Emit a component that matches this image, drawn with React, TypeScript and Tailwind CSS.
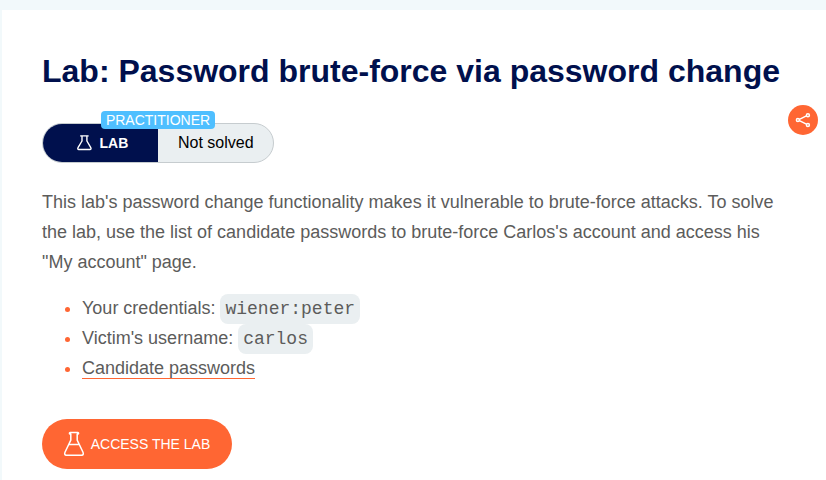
import type { ReactNode } from "react";

function Code({ children }: { children: ReactNode }) {
  return (
    <code className="rounded-lg bg-[#eaeff1] p-[5px] font-['Liberation_Mono',monospace] text-[18px]">
      {children}
    </code>
  );
}

function Bullet({ children }: { children: ReactNode }) {
  return (
    <li className="flex h-[30px] items-start">
      <span className="mt-[14px] mr-[12px] ml-[23px] size-[5px] shrink-0 rounded-full bg-[#ff6633]" />
      <span className="whitespace-pre">{children}</span>
    </li>
  );
}

function SmallFlask() {
  return (
    <svg className="h-[16px] w-[16px]" viewBox="0 0 16 16" fill="none" stroke="#fff" strokeWidth="1.4" strokeLinejoin="round" strokeLinecap="round">
      <path d="M4.7 .9h7.4M6 1v5L2 12.7q-.8 1.6 .9 1.8h11q1.7-.2 .9-1.8L10.9 6V1" />
    </svg>
  );
}

function LargeFlask() {
  return (
    <svg className="h-[26px] w-[22px]" viewBox="0 0 22 26" fill="none" stroke="#fff" strokeWidth="1.5" strokeLinejoin="round">
      <path d="M7.1 1.5h7.8q.7 0 .7.8t-.7.8h-.7v6l5.8 12.2q1 2.6-1.3 2.9H3.3q-2.3-.3-1.3-2.9L7.8 9.1v-6h-.7q-.7 0-.7-.8t.7-.8zM5.2 13.6h11.6" />
    </svg>
  );
}

export default function App() {
  return (
    <div className="h-[480px] w-full overflow-hidden bg-[#f2f9fb] pt-[10px] pl-[2px] font-['Liberation_Sans',Arial,sans-serif] text-[#5c5c5b]">
      <main className="relative h-full bg-white pt-[41px] pl-[40px]">
        <h1 className="text-[32px] leading-[40px] font-bold whitespace-nowrap text-[#00104d]">
          Lab: Password brute-force via password change
        </h1>

        <div className="relative mt-[32px] flex h-[40px] w-[232px]">
          <div className="flex w-full overflow-hidden rounded-full border border-[#c6cccf] bg-[#eaeff1]">
            <div className="flex w-[115px] items-center bg-[#00104d] pl-[33px] text-white">
              <SmallFlask />
              <span className="ml-[7.5px] text-[14px] font-bold">LAB</span>
            </div>
            <div className="flex flex-1 items-center pl-[20px] text-[16px] whitespace-nowrap text-black">Not solved</div>
          </div>
          <span className="absolute -top-[12px] left-[59px] flex h-[18px] w-[114px] items-center justify-center rounded-[4px] bg-[#4fbfff] text-[14px] leading-[18px] text-white">
            PRACTITIONER
          </span>
        </div>

        <p className="mt-[24px] w-[744px] text-[18px] leading-[30px]">
          This lab's password change functionality makes it vulnerable to brute-force attacks. To solve
          the lab, use the list of candidate passwords to brute-force Carlos's account and access his
          "My account" page.
        </p>

        <ul className="mt-[16px] text-[18px] leading-[30px]">
          <Bullet>Your credentials: <Code>wiener:peter</Code></Bullet>
          <Bullet>Victim's username: <Code>carlos</Code></Bullet>
          <Bullet>
            <a href="#" className="border-b border-b-[#ff6633]">Candidate passwords</a>
          </Bullet>
        </ul>

        <a href="#" className="mt-[36px] flex h-[50px] w-[190px] items-center rounded-full bg-[#ff6633] pl-[21px] text-[14px] whitespace-nowrap text-white">
          <LargeFlask />
          <span className="ml-[5.7px]">ACCESS THE LAB</span>
        </a>

        <button aria-label="Share" className="absolute top-[95px] right-[8px] flex size-[30px] items-center justify-center rounded-full bg-[#ff6633]">
          <svg className="size-[16px]" viewBox="0 0 16 16" fill="none" stroke="#fff" strokeWidth="1.5">
            <circle cx="2.9" cy="8" r="1.5" />
            <circle cx="12.9" cy="3.2" r="1.5" />
            <circle cx="12.9" cy="12.9" r="1.5" />
            <path d="M4.4 7.3l7-3.4M4.4 8.7l7 3.5" />
          </svg>
        </button>
      </main>
    </div>
  );
}
